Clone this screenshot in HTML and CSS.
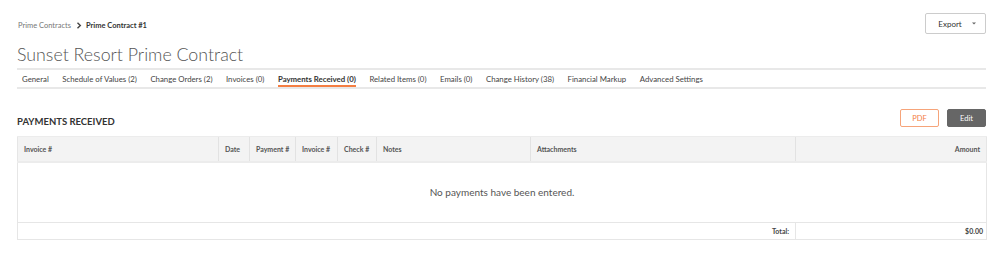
FILE: index.html
```html
<!DOCTYPE html>
<html lang="en">
<head>
  <meta charset="UTF-8">
  <title>Sunset Resort Prime Contract - Payments Received</title>
  <link rel="stylesheet" href="styles.css">
</head>
<body>
  <div class="page">
    <div class="top-bar">
      <div class="breadcrumb">
        <a href="#" class="crumb">Prime Contracts</a>
        <span class="crumb-sep">
          <svg width="6" height="7" viewBox="0 0 6 7"><path d="M1.5 0.8 L4.3 3.5 L1.5 6.2" fill="none" stroke="#444" stroke-width="1.4"/></svg>
        </span>
        <span class="crumb-current">Prime Contract #1</span>
      </div>
      <button class="export-btn">
        Export
        <svg width="4" height="3" viewBox="0 0 4 3"><path d="M0 0.5 L4 0.5 L2 2.5 Z" fill="#666"/></svg>
      </button>
    </div>

    <h1 class="title">Sunset Resort Prime Contract</h1>

    <div class="tabs">
      <a href="#" class="tab">General</a>
      <a href="#" class="tab">Schedule of Values (2)</a>
      <a href="#" class="tab">Change Orders (2)</a>
      <a href="#" class="tab">Invoices (0)</a>
      <a href="#" class="tab active">Payments Received (0)</a>
      <a href="#" class="tab">Related Items (0)</a>
      <a href="#" class="tab">Emails (0)</a>
      <a href="#" class="tab">Change History (38)</a>
      <a href="#" class="tab">Financial Markup</a>
      <a href="#" class="tab">Advanced Settings</a>
    </div>

    <div class="section-head">
      <h2>PAYMENTS RECEIVED</h2>
      <div class="actions">
        <button class="btn btn-pdf">PDF</button>
        <button class="btn btn-edit">Edit</button>
      </div>
    </div>

    <table class="payments">
      <colgroup>
        <col class="c-invoice">
        <col class="c-date">
        <col class="c-payment">
        <col class="c-invoice2">
        <col class="c-check">
        <col class="c-notes">
        <col class="c-attach">
        <col class="c-amount">
      </colgroup>
      <thead>
        <tr>
          <th>Invoice #</th>
          <th>Date</th>
          <th>Payment #</th>
          <th>Invoice #</th>
          <th>Check #</th>
          <th>Notes</th>
          <th>Attachments</th>
          <th class="right">Amount</th>
        </tr>
      </thead>
      <tbody>
        <tr class="empty-row">
          <td colspan="8">No payments have been entered.</td>
        </tr>
      </tbody>
      <tfoot>
        <tr>
          <td colspan="7" class="right">Total:</td>
          <td class="right">$0.00</td>
        </tr>
      </tfoot>
    </table>
  </div>
</body>
</html>
```

FILE: styles.css
```css
* {
  margin: 0;
  padding: 0;
  box-sizing: border-box;
}

body {
  font-family: Lato, 'Noto Sans', Arial, sans-serif;
  background: #fff;
  color: #333;
}

.page {
  padding: 13px 13px 0 17px;
}

.top-bar {
  display: flex;
  justify-content: space-between;
  align-items: center;
  height: 21px;
}

.breadcrumb {
  display: flex;
  align-items: center;
  font-size: 7.5px;
  padding-left: 1px;
  padding-top: 3px;
}

.crumb {
  color: #777;
  text-decoration: none;
}

.crumb-sep {
  display: inline-flex;
  margin: 0 4px 0 5px;
}

.crumb-current {
  font-weight: bold;
  color: #333;
}

.export-btn {
  width: 61px;
  height: 21px;
  background: #fff;
  border: 1px solid #ccc;
  border-radius: 2px;
  font-family: inherit;
  font-size: 8px;
  color: #333;
  display: flex;
  align-items: center;
  justify-content: center;
  gap: 10px;
  padding-left: 3px;
}

.title {
  font-size: 17.8px;
  font-weight: 300;
  color: #555;
  margin-top: 8px;
  height: 25px;
  line-height: 25px;
}

.tabs {
  display: flex;
  gap: 13.5px;
  border-top: 2px solid #e8e8e8;
  border-bottom: 2px solid #e8e8e8;
  padding-left: 5px;
  margin-top: 1px;
  height: 21px;
}

.tab {
  font-size: 7.8px;
  color: #444;
  text-decoration: none;
  line-height: 17px;
  padding-top: 1px;
}

.tab.active {
  font-weight: bold;
  color: #333;
  border-bottom: 2px solid #f47e42;
}

.section-head {
  display: flex;
  justify-content: space-between;
  align-items: center;
  margin-top: 20px;
  height: 18px;
}

.section-head h2 {
  font-size: 9.5px;
  font-weight: bold;
  color: #333;
  padding-top: 7px;
}

.actions {
  display: flex;
  gap: 8px;
}

.btn {
  width: 39px;
  height: 18px;
  font-family: inherit;
  font-size: 7.5px;
  border-radius: 2px;
}

.btn-pdf {
  background: #fff;
  color: #f47e42;
  border: 1px solid #f6a47a;
}

.btn-edit {
  background: #666;
  color: #fff;
  border: 1px solid #666;
}

.payments {
  width: 969px;
  margin-top: 9px;
  border-collapse: collapse;
  table-layout: fixed;
  border: 1px solid #e6e6e6;
  font-size: 7px;
}

.c-invoice { width: 201px; }
.c-date { width: 31px; }
.c-payment { width: 46px; }
.c-invoice2 { width: 42px; }
.c-check { width: 39px; }
.c-notes { width: 154px; }
.c-attach { width: 265px; }
.c-amount { width: 191px; }

.payments th {
  background: #f3f3f3;
  height: 25px;
  text-align: left;
  font-weight: bold;
  color: #555;
  padding: 0 6px;
  border-left: 1px solid #e2e2e2;
  border-top: 1px solid #ececec;
  border-bottom: 2px solid #ececec;
  white-space: nowrap;
}

.payments th:first-child {
  border-left: none;
}

.payments .right {
  text-align: right;
}

.empty-row td {
  height: 61px;
  text-align: center;
  font-size: 10px;
  color: #555;
}

.payments tfoot td {
  height: 17px;
  border-top: 1px solid #e6e6e6;
  font-weight: bold;
  color: #444;
  padding: 0 6px;
}

.payments tfoot td + td {
  border-left: 1px solid #e6e6e6;
  padding-right: 3px;
}
```
